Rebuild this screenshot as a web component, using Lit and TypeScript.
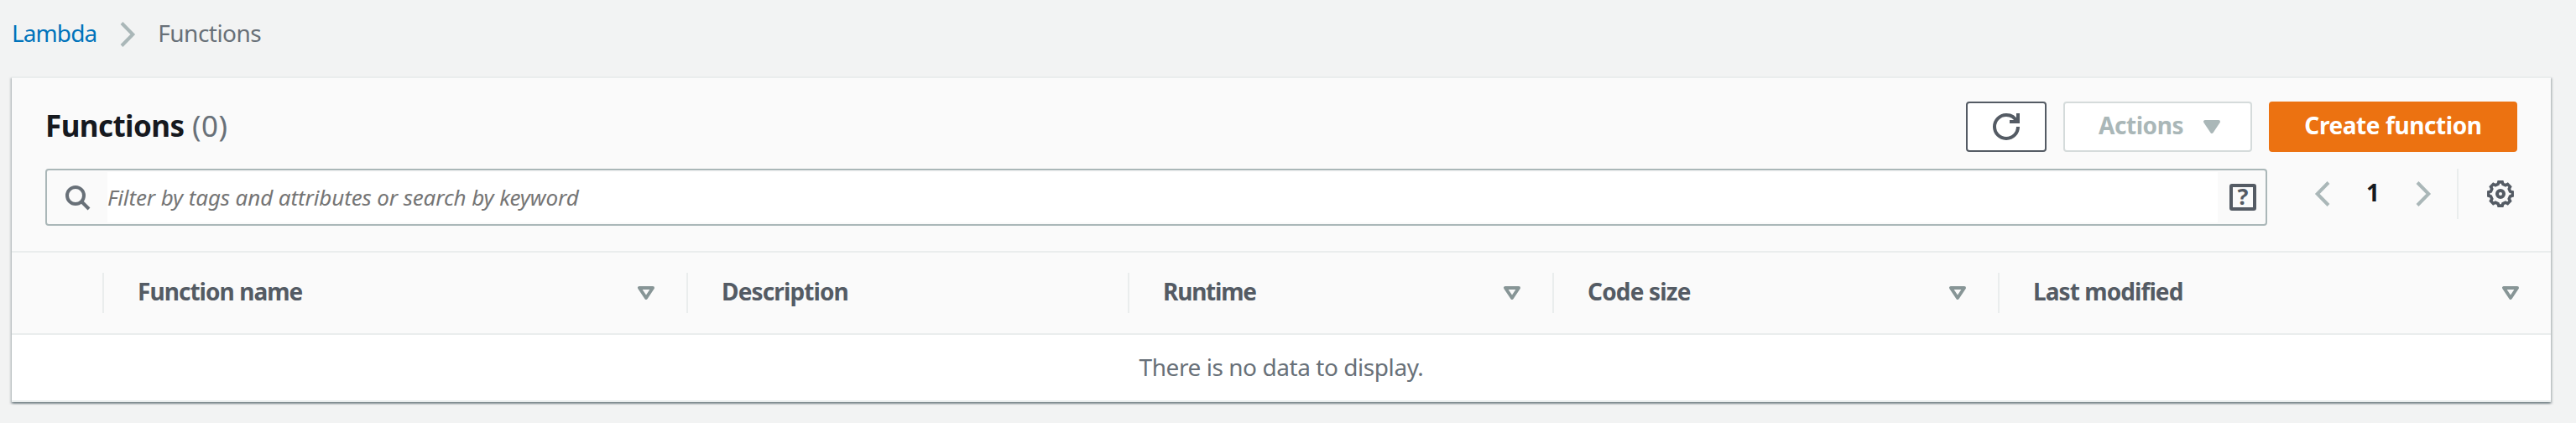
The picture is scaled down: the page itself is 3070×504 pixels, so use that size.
import { LitElement, html, css } from "lit";
import { customElement } from "lit/decorators.js";
import { classMap } from "lit/directives/class-map.js";

const chevronRight = () => html`<svg width="32" height="32" viewBox="0 0 32 32" fill="none" stroke="#aab7b8" stroke-width="4"><path d="M9 2.5 22.3 16 9 29.5" /></svg>`;

const chevronLeft = () => html`<svg width="32" height="32" viewBox="0 0 32 32" fill="none" stroke="#aab7b8" stroke-width="4"><path d="M23 2.5 9.7 16 23 29.5" /></svg>`;

const caret = (color: string, fill: string) => html`<svg width="32" height="32" viewBox="0 0 16 16" fill=${fill} stroke=${color} stroke-width="2" stroke-linejoin="round"><path d="M4 5h8l-4 6z" /></svg>`;

const refreshIcon = () => html`<svg width="32" height="32" viewBox="0 0 16 16" fill="none" stroke="#545b64" stroke-width="2">
  <path d="M10 5h5V0" />
  <path d="M15 8a6.957 6.957 0 0 1-7 7 6.957 6.957 0 0 1-7-7 6.957 6.957 0 0 1 7-7 6.87 6.87 0 0 1 6.3 4" />
</svg>`;

const searchIcon = () => html`<svg width="32" height="32" viewBox="0 0 16 16" fill="none" stroke="#687078" stroke-width="2">
  <circle cx="7" cy="7" r="5" /><path d="m15 15-4.5-4.5" />
</svg>`;

/* Eight-toothed outline: two points on the tip and two at the root of each tooth. */
const gearPoints = Array.from({ length: 8 }, (_, i) =>
  [[-14.5, 11.9], [-8.5, 14.3], [8.5, 14.3], [14.5, 11.9]].map(([offset, r]) => {
    const a = ((i * 45 + offset) * Math.PI) / 180;
    return `${(16 + r * Math.cos(a)).toFixed(2)},${(16 + r * Math.sin(a)).toFixed(2)}`;
  }).join(" "),
).join(" ");

const gearIcon = () => html`<svg width="32" height="32" viewBox="0 0 32 32" fill="none" stroke="#545b64" stroke-width="4">
  <polygon points=${gearPoints} stroke-width="3.6" /><circle cx="16" cy="16" r="4" />
</svg>`;

const columns = [
  { label: "Function name", sortable: true, cls: "name" },
  { label: "Description", sortable: false, cls: "desc" },
  { label: "Runtime", sortable: true, cls: "runtime" },
  { label: "Code size", sortable: true, cls: "size" },
  { label: "Last modified", sortable: true, cls: "modified" },
];

@customElement("app-root")
export class AppRoot extends LitElement {
  static styles = css`
    :host {
      display: block; height: 504px; overflow: hidden; background: #f2f3f3; color: #16191f;
      font: 28px/40px "Noto Sans", "Open Sans", sans-serif;
    }
    * { box-sizing: border-box; }
    svg { display: block; flex: none; }
    .t { display: block; white-space: nowrap; padding-bottom: 4px; }

    .crumbs { display: flex; align-items: center; height: 91px; padding: 0 14px 9px; color: #687078; }
    .link { color: #0073bb; letter-spacing: -0.9px; margin-right: 21px; }
    .here { letter-spacing: -0.52px; margin-left: 20px; }

    .panel {
      margin: 0 30px 0 14px; height: 388px; background: #fff;
      border-top: 2px solid #eaeded; border-bottom: 2px solid #eaeded;
      box-shadow: 0 2px 2px 0 rgba(0, 28, 36, 0.3), 2px 2px 2px 0 rgba(0, 28, 36, 0.15), -2px 2px 2px 0 rgba(0, 28, 36, 0.15);
    }
    .head { height: 208px; padding: 28px 40px 0; background: #fafafa; border-bottom: 2px solid #eaeded; }
    .bar { display: flex; align-items: center; height: 60px; gap: 20px; }
    .heading { display: flex; flex: 1; font-size: 35px; line-height: 44px; }
    .heading .t { padding-bottom: 3px; }
    .title { margin: 0; font-size: inherit; font-weight: 700; letter-spacing: -0.57px; }
    .count { margin-left: 9.5px; color: #687078; letter-spacing: 0.49px; }

    .btn { display: flex; align-items: center; height: 60px; border: 2px solid #545b64; border-radius: 4px; background: #fff; font-weight: 700; }
    .refresh { width: 96px; justify-content: center; }
    .actions { width: 225px; justify-content: space-between; padding: 0 30px 0 40px; border-color: #d5dbdb; color: #aab7b8; letter-spacing: -0.44px; }
    .create { width: 296px; justify-content: center; border-color: #ec7211; background: #ec7211; color: #fff; letter-spacing: -0.41px; }

    .tools { display: flex; align-items: flex-start; margin-top: 20px; }
    .search { display: flex; align-items: center; flex: 1; height: 68px; border: 2px solid #aab7b8; border-radius: 4px; padding: 0 11px 0 20px; }
    .input { flex: 1; height: 60px; margin: 0 14px 0 20px; display: flex; align-items: center; background: #fff; }
    .ph { font-size: 26px; font-style: italic; color: #757575; letter-spacing: -0.12px; padding: 0; }
    .help { display: flex; align-items: center; justify-content: center; width: 32px; height: 32px; border: 4px solid #545b64; border-radius: 3px; color: #545b64; font-size: 27px; font-weight: 700; }
    .help .t { padding-bottom: 2px; }
    .pager { display: flex; align-items: center; justify-content: space-between; width: 152px; height: 60px; margin-left: 50px; }
    .page { font-weight: 700; }
    .prefs { display: flex; align-items: center; height: 60px; margin-left: 24px; padding: 0 4px 0 34px; border-left: 2px solid #eaeded; }

    .cols { display: grid; grid-template-columns: 110px 696px 526px 506px 531px 1fr; align-items: center; height: 98px; background: #fafafa; border-bottom: 2px solid #eaeded; color: #545b64; font-weight: 700; }
    .col { display: flex; align-items: center; justify-content: space-between; height: 48px; padding: 0 32px 0 40px; border-right: 2px solid #eaeded; }
    .modified { border-right: 0; letter-spacing: -0.92px; }
    .name { letter-spacing: -0.95px; }
    .desc { letter-spacing: -0.87px; }
    .runtime { letter-spacing: -1.22px; }
    .size { letter-spacing: -0.84px; }
    .empty { display: flex; align-items: center; justify-content: center; height: 78px; color: #687078; letter-spacing: -0.44px; }
    .empty .t { padding-bottom: 2px; }
  `;

  render() {
    return html`
      <nav class="crumbs"><a class="t link">Lambda</a>${chevronRight()}<span class="t here">Functions</span></nav>
      <section class="panel">
        <div class="head">
          <div class="bar">
            <div class="heading"><h2 class="t title">Functions</h2><span class="t count">(0)</span></div>
            <div class="btn refresh">${refreshIcon()}</div>
            <div class="btn actions"><span class="t">Actions</span>${caret("#aab7b8", "#aab7b8")}</div>
            <div class="btn create"><span class="t">Create function</span></div>
          </div>
          <div class="tools">
            <div class="search">
              ${searchIcon()}
              <div class="input"><span class="t ph">Filter by tags and attributes or search by keyword</span></div>
              <div class="help"><span class="t">?</span></div>
            </div>
            <div class="pager">${chevronLeft()}<span class="t page">1</span>${chevronRight()}</div>
            <div class="prefs">${gearIcon()}</div>
          </div>
        </div>
        <div class="cols">
          <div class="col"></div>
          ${columns.map((c) => html`<div class=${classMap({ col: true, [c.cls]: true })}><span class="t">${c.label}</span>${c.sortable ? caret("#879596", "none") : ""}</div>`)}
        </div>
        <div class="empty"><span class="t">There is no data to display.</span></div>
      </section>`;
  }
}
